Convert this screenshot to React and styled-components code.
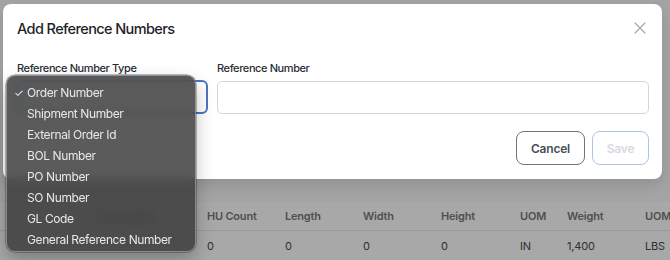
import React from 'react';
import styled, { createGlobalStyle } from 'styled-components';

const Global = createGlobalStyle`
  html, body { margin: 0; padding: 0; }
  body {
    width: 670px; height: 260px; overflow: hidden;
    background: #a5a5a5;
    font-family: Inter, "Noto Sans", "Liberation Sans", sans-serif;
    -webkit-font-smoothing: antialiased;
  }
`;

const Page = styled.div`
  position: relative;
  width: 670px;
  height: 260px;
  overflow: hidden;
  background: #a4a4a4;
  display: flex;
  flex-direction: column;
`;

const PageTop = styled.div`
  height: 202px;
  flex: none;
`;

const Table = styled.div`
  display: grid;
  grid-template-columns: 97px 110px 78px 78px 78px 79px 47px 78px 1fr;
  background: #a8a8a8;
`;

const HeadCell = styled.div`
  height: 28px;
  display: flex;
  align-items: center;
  border-bottom: 1px solid #989898;
  font-size: 11px;
  font-weight: 600;
  letter-spacing: -0.2px;
  color: #4f4f4f;
  white-space: nowrap;
`;

const Cell = styled.div`
  height: 29px;
  display: flex;
  align-items: center;
  font-size: 11px;
  letter-spacing: -0.2px;
  color: #2f2f2f;
  white-space: nowrap;
`;

const Modal = styled.div`
  position: absolute;
  left: 3px;
  top: 4px;
  width: 659px;
  height: 175px;
  box-sizing: border-box;
  background: #fff;
  border-radius: 8px;
  box-shadow: 0 6px 14px rgba(0, 0, 0, 0.12);
  padding: 14px 13px 14px 14px;
  display: flex;
  flex-direction: column;
`;

const ModalHeader = styled.div`
  display: flex;
  align-items: center;
  justify-content: space-between;
  height: 20px;
`;

const Title = styled.h2`
  margin: 0;
  font-size: 14.5px;
  font-weight: 500;
  color: #1f2328;
  letter-spacing: -0.6px;
`;

const CloseButton = styled.button`
  border: none;
  background: none;
  padding: 0;
  margin-right: 2px;
  width: 14px;
  height: 14px;
  display: flex;
  align-items: center;
  justify-content: center;
  color: #a4a8ae;
`;

const Fields = styled.div`
  display: grid;
  grid-template-columns: 191px 432px;
  column-gap: 9px;
  margin-top: 23px;
`;

const Field = styled.div`
  display: flex;
  flex-direction: column;
  gap: 6px;
`;

const Label = styled.label`
  font-size: 11px;
  font-weight: 500;
  letter-spacing: -0.4px;
  color: #2a2e33;
  line-height: 14px;
`;

const SelectBox = styled.div`
  height: 34px;
  margin-top: -1px;
  box-sizing: border-box;
  border: 2px solid #4a74c2;
  border-radius: 6px;
`;

const Input = styled.input`
  height: 33px;
  box-sizing: border-box;
  border: 1px solid #d3d6db;
  border-radius: 5px;
  outline: none;
  font: inherit;
`;

const Footer = styled.div`
  display: flex;
  justify-content: flex-end;
  gap: 7px;
  margin-top: 17px;
`;

const Button = styled.button`
  height: 34px;
  box-sizing: border-box;
  padding: 0;
  width: ${p => p.$w}px;
  border-radius: 8px;
  background: #fff;
  font-family: inherit;
  font-size: 12px;
  font-weight: 600;
  letter-spacing: -0.2px;
  border: 1px solid ${p => (p.$disabled ? '#aec3e6' : '#6e7480')};
  color: ${p => (p.$disabled ? '#d7dadf' : '#4a4f57')};
`;

const Menu = styled.div`
  position: absolute;
  left: 6px;
  top: 75px;
  width: 190px;
  height: 177px;
  box-sizing: border-box;
  padding: 6px 0 3px;
  border-radius: 9px;
  background: rgba(58, 58, 58, 0.83);
  backdrop-filter: blur(6px);
  border: 1px solid rgba(190, 190, 190, 0.55);
  box-shadow: 0 0 0 0.5px rgba(0, 0, 0, 0.5), 0 8px 18px rgba(0, 0, 0, 0.25);
  z-index: 2;
`;

const MenuItem = styled.div`
  height: 21px;
  display: flex;
  align-items: center;
  padding-left: 7px;
  font-size: 12px;
  letter-spacing: -0.4px;
  color: #e8e8e8;
  white-space: nowrap;
`;

const Check = styled.span`
  width: 13px;
  flex: none;
  font-size: 11px;
`;

const options = [
  'Order Number',
  'Shipment Number',
  'External Order Id',
  'BOL Number',
  'PO Number',
  'SO Number',
  'GL Code',
  'General Reference Number',
];

const headers = ['', 'Description', 'HU Count', 'Length', 'Width', 'Height', 'UOM', 'Weight', 'UOM'];
const values = ['', '', '0', '0', '0', '0', 'IN', '1,400', 'LBS'];

export default function App() {
  return (
    <>
      <Global />
      <Page>
        <PageTop />
        <Table>
          {headers.map((h, i) => (
            <HeadCell key={'h' + i}>{h}</HeadCell>
          ))}
          {values.map((v, i) => (
            <Cell key={'v' + i}>{v}</Cell>
          ))}
        </Table>

        <Modal>
          <ModalHeader>
            <Title>Add Reference Numbers</Title>
            <CloseButton aria-label="Close">
              <svg width="12" height="12" viewBox="0 0 12 12" fill="none" stroke="currentColor" strokeWidth="1.2" strokeLinecap="round">
                <path d="M1 1 L11 11 M11 1 L1 11" />
              </svg>
            </CloseButton>
          </ModalHeader>
          <Fields>
            <Field>
              <Label>Reference Number Type</Label>
              <SelectBox />
            </Field>
            <Field>
              <Label>Reference Number</Label>
              <Input />
            </Field>
          </Fields>
          <Footer>
            <Button $w={69}>Cancel</Button>
            <Button $w={57} $disabled>Save</Button>
          </Footer>
        </Modal>

        <Menu>
          {options.map((o, i) => (
            <MenuItem key={o}>
              <Check>{i === 0 ? '✓' : ''}</Check>
              {o}
            </MenuItem>
          ))}
        </Menu>
      </Page>
    </>
  );
}
